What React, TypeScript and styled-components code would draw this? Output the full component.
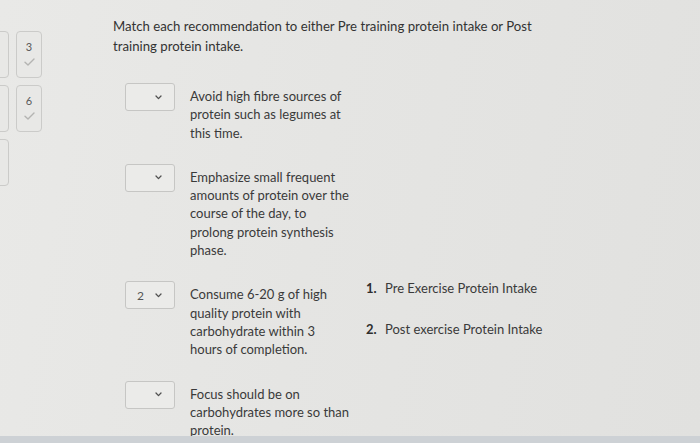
import styled, { createGlobalStyle } from 'styled-components';

const GlobalStyle = createGlobalStyle`
  html, body {
    margin: 0;
    padding: 0;
  }
  body {
    background: #e4e4e2;
    font-family: Lato, "Open Sans", "Liberation Sans", sans-serif;
    color: #363636;
  }
`;

type Recommendation = { lines: string[]; answer?: string };

// each statement keeps its wrapped lines as they appear in the narrow column
const recommendations: Recommendation[] = [
  { lines: ['Avoid high fibre sources of', 'protein such as legumes at', 'this time.'] },
  {
    lines: [
      'Emphasize small frequent',
      'amounts of protein over the',
      'course of the day, to',
      'prolong protein synthesis',
      'phase.',
    ],
  },
  {
    lines: ['Consume 6-20 g of high', 'quality protein with', 'carbohydrate within 3', 'hours of completion.'],
    answer: '2',
  },
  { lines: ['Focus should be on', 'carbohydrates more so than', 'protein.'] },
];

const choices = ['Pre Exercise Protein Intake', 'Post exercise Protein Intake'];

const questionNav = [
  { number: '3', answered: true },
  { number: '6', answered: true },
  { number: '', answered: false },
];

function Check() {
  return (
    <svg width="11" height="8" viewBox="0 0 11 8" fill="none">
      <path d="M1 4.2 L4 7 L10 1" stroke="#b4b4b2" strokeWidth="1.4" strokeLinecap="round" strokeLinejoin="round" />
    </svg>
  );
}

function Chevron() {
  return (
    <svg width="7" height="5" viewBox="0 0 7 5" fill="none">
      <path d="M1 1 L3.5 3.6 L6 1" stroke="#505050" strokeWidth="1.3" strokeLinecap="round" strokeLinejoin="round" />
    </svg>
  );
}

export default function App() {
  return (
    <Page>
      <GlobalStyle />
      <Content>
        <Sidebar>
          {questionNav.map((q, i) => (
            <NavRow key={i}>
              <NavTile $cut />
              {q.number && (
                <NavTile>
                  <NavNumber>{q.number}</NavNumber>
                  {q.answered && <Check />}
                </NavTile>
              )}
            </NavRow>
          ))}
        </Sidebar>
        <Main>
          <Prompt>
            Match each recommendation to either Pre training protein intake or Post training protein intake.
          </Prompt>
          <MatchGrid>
            <ItemList>
              {recommendations.map((r, i) => (
                <Item key={i}>
                  <Select>
                    <SelectValue>{r.answer ?? ''}</SelectValue>
                    <Chevron />
                  </Select>
                  <ItemText>
                    {r.lines.map((line) => (
                      <Line key={line}>{line}</Line>
                    ))}
                  </ItemText>
                </Item>
              ))}
            </ItemList>
            <ChoiceList>
              {choices.map((c, i) => (
                <Choice key={c}>
                  <ChoiceNumber>{i + 1}.</ChoiceNumber>
                  <span>{c}</span>
                </Choice>
              ))}
            </ChoiceList>
          </MatchGrid>
        </Main>
      </Content>
      <BottomBar />
    </Page>
  );
}

const Page = styled.div`
  display: flex;
  flex-direction: column;
  height: 100vh;
  overflow: hidden;
  background: linear-gradient(100deg, #e9e9e7 0%, #e5e5e3 45%, #e1e1df 100%);
`;

const Content = styled.div`
  display: flex;
  flex: 1;
  min-height: 0;
`;

const Sidebar = styled.nav`
  display: flex;
  flex-direction: column;
  gap: 7px;
  width: 50px;
  padding-top: 31px;
  flex-shrink: 0;
`;

const NavRow = styled.div`
  display: flex;
  gap: 7px;
`;

const NavTile = styled.div<{ $cut?: boolean }>`
  box-sizing: border-box;
  display: flex;
  flex-direction: column;
  align-items: center;
  gap: 5px;
  width: 26px;
  height: 47px;
  padding-top: 9px;
  margin-left: ${({ $cut }) => ($cut ? '-17px' : '0')};
  border: 1px solid #cbcbc9;
  border-radius: 4px;
  background: #e8e8e6;
`;

const NavNumber = styled.span`
  font-size: 11px;
  line-height: 12px;
  color: #5a5a5a;
`;

const Main = styled.main`
  flex: 1;
  padding: 16px 0 0 63px;
`;

const Prompt = styled.p`
  margin: 0;
  width: 440px;
  font-size: 13.2px;
  line-height: 20px;
  color: #333;
`;

const MatchGrid = styled.div`
  display: grid;
  grid-template-columns: 241px auto;
  margin: 27px 0 0 12px;
`;

const ItemList = styled.div`
  display: flex;
  flex-direction: column;
  gap: 22px;
`;

const Item = styled.div`
  display: flex;
  align-items: flex-start;
  gap: 15px;
`;

const Select = styled.div`
  box-sizing: border-box;
  display: flex;
  align-items: center;
  justify-content: space-between;
  width: 50px;
  height: 28px;
  padding: 0 12px 0 11px;
  border: 1px solid #c6c6c4;
  border-radius: 3px;
  background: #ebebe9;
  flex-shrink: 0;
`;

const SelectValue = styled.span`
  font-size: 12px;
  color: #555;
`;

const ItemText = styled.p`
  margin: 4px 0 0;
  font-size: 13px;
  line-height: 18.3px;
  color: #3a3a3a;
`;

const Line = styled.span`
  display: block;
  white-space: nowrap;
`;

const ChoiceList = styled.ol`
  list-style: none;
  margin: 0;
  padding: 196px 0 0;
  display: flex;
  flex-direction: column;
  gap: 22px;
`;

const Choice = styled.li`
  display: flex;
  gap: 8px;
  font-size: 13px;
  line-height: 19px;
  color: #3a3a3a;
`;

const ChoiceNumber = styled.span`
  width: 11px;
  font-weight: 700;
  color: #2e2e2e;
`;

const BottomBar = styled.div`
  height: 7px;
  flex-shrink: 0;
  background: #cdd1d5;
`;
